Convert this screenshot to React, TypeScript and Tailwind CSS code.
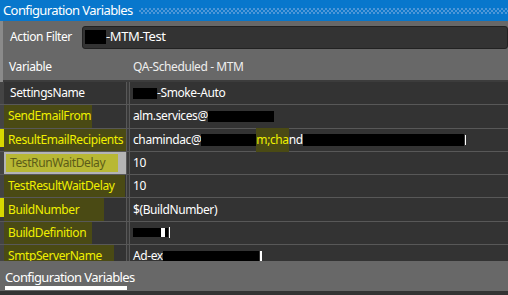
const rows: { name: string; hl?: string; edge?: boolean; value: React.ReactNode; sel?: boolean }[] = [
  {
    name: "SettingsName",
    value: (
      <>
        <span className="inline-block w-[24px] h-[11px] bg-black align-[-1px]" />
        -Smoke-Auto
      </>
    ),
  },
  {
    name: "SendEmailFrom",
    hl: "w-[88px]",
    value: (
      <>
        alm.services@
        <span className="inline-block w-[66px] h-[11px] bg-black align-[-1px]" />
      </>
    ),
  },
  {
    name: "ResultEmailRecipients",
    hl: "w-[122px]",
    edge: true,
    value: (
      <>
        chamindac@
        <span className="inline-block w-[55px] h-[12px] bg-black align-[-2px]" />
        <span className="bg-[#4a4a14] text-[#f0f000] py-[3px]">m;cha</span>
        nd
        <span className="inline-block w-[161px] h-[12px] bg-black align-[-2px]" />
        <span className="inline-block w-[1px] h-[10px] bg-white ml-[1px] align-[-1px]" />
      </>
    ),
  },
  { name: "TestRunWaitDelay", hl: "w-[112px]", sel: true, value: "10" },
  { name: "TestResultWaitDelay", hl: "w-[121px]", value: "10" },
  { name: "BuildNumber", hl: "w-[100px]", edge: true, value: "$(BuildNumber)" },
  {
    name: "BuildDefinition",
    hl: "w-[88px]",
    value: (
      <>
        <span className="inline-block w-[28px] h-[9px] bg-black align-[1px]" />
        <span className="inline-block w-[4px] h-[9px] bg-white align-[1px]" />
        <span className="inline-block w-[3px] h-[9px] bg-black align-[1px]" />
        <span className="inline-block w-[1px] h-[11px] bg-white ml-[1px] align-[0px]" />
      </>
    ),
  },
  {
    name: "SmtpServerName",
    hl: "w-[110px]",
    value: (
      <>
        Ad-ex
        <span className="inline-block w-[96px] h-[10px] bg-black align-[-2px]" />
        <span className="inline-block w-[2px] h-[10px] bg-white ml-[1px] align-[-2px]" />
      </>
    ),
  },
];

export default function App() {
  return (
    <div className="w-[508px] h-[295px] overflow-hidden bg-[#2b2b2b] text-white text-[12px] tracking-[-0.4px] font-['Noto_Sans',sans-serif] flex flex-col">
      <div className="h-[21px] shrink-0 bg-[#0877cc] flex items-center pl-[3px] gap-[6px]">
        <span className="text-[13px] leading-none tracking-[-0.6px]">Configuration Variables</span>
        <div className="flex-1 h-[6px] bg-[repeating-conic-gradient(#4d97d8_0_25%,#0877cc_0_50%)] bg-[length:4px_4px]" />
      </div>

      <div className="bg-[#686868] border-l-[3px] border-[#8a8a8a] flex flex-col">
        <div className="h-[32px] flex items-center">
          <span className="w-[79px] pl-[7px]">Action Filter</span>
          <div className="flex-1 h-[23px] bg-[#333] border border-[#222] rounded-[3px] flex items-center pl-[2px] text-[13px]">
            <span className="inline-block w-[21px] h-[14px] bg-black" />
            -MTM-Test
          </div>
        </div>
        <div className="h-[29px] flex items-center border-b-2 border-[#3c3c3c]">
          <span className="w-[127px] pl-[6px]">Variable</span>
          <span className="pl-[3px] text-[#eee]">QA-Scheduled - MTM</span>
        </div>
      </div>

      <div className="flex-1 bg-[#3a3a3a] flex flex-col overflow-hidden">
        {rows.map((r) => (
          <div key={r.name} className="h-[23.3px] shrink-0 flex border-b border-[#585858]">
            <div className={"w-[4px] shrink-0 " + (r.edge ? "bg-[#d8d800] mb-[4px]" : "bg-[#444]")} />
            <div
              className={
                "w-[123px] shrink-0 border-r border-[#585858] flex items-center " +
                (r.sel ? "bg-[#b4b4b4] p-[2px]" : "bg-[#333]")
              }
            >
              {r.hl ? (
                <div
                  className={
                    "h-full flex items-center pl-[4px] whitespace-nowrap " +
                    r.hl +
                    (r.sel ? " bg-[#b8b834] text-[#5c5c18]" : " bg-[#4a4a14] text-[#f0f000]")
                  }
                >
                  {r.name}
                </div>
              ) : (
                <span className="pl-[6px]">{r.name}</span>
              )}
            </div>
            <div className="flex-1 bg-[#333] border-l border-[#585858] ml-[2px] flex items-center pl-[3px] whitespace-nowrap">
              {r.value}
            </div>
          </div>
        ))}
      </div>

      <div className="h-[30px] shrink-0 bg-[#686868] flex flex-col pt-[9px] pl-[5px]">
        <span className="text-[13px] leading-[14px] tracking-[-0.6px]">Configuration Variables</span>
        <div className="w-[122px] h-[4px] bg-white mt-[2px]" />
      </div>
      <div className="h-[4px] shrink-0 bg-[#333]" />
    </div>
  );
}
